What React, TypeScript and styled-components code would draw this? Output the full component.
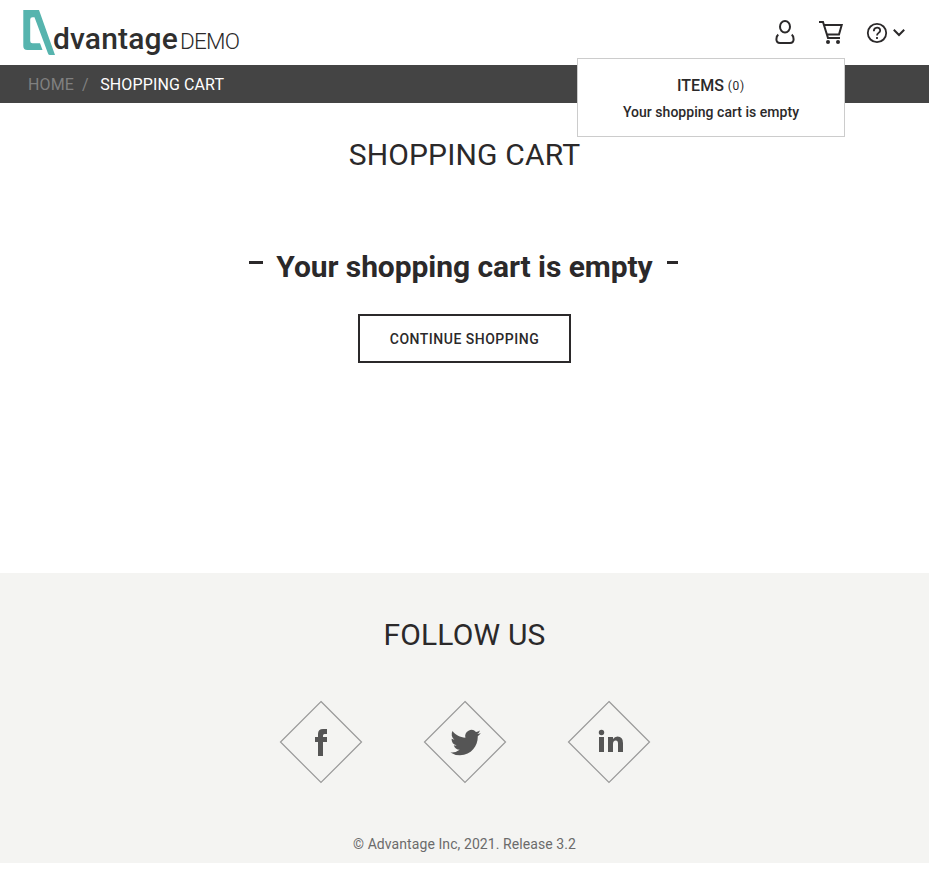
import React from "react";
import styled, { createGlobalStyle } from "styled-components";

const GlobalStyle = createGlobalStyle`
  * { box-sizing: border-box; }
  body { margin: 0; background: #fff; color: #2b292a; font-family: Roboto, "Liberation Sans", sans-serif; }
  h1, h2, p { margin: 0; font-weight: 400; }
`;

const Header = styled.header`
  position: relative;
  display: flex;
  justify-content: space-between;
  height: 65px;
  padding: 0 22px 0 23px;
`;

const Logo = styled.a`
  display: flex;
  align-items: flex-start;
  padding-top: 10px;
`;

const LogoName = styled.span`
  margin: 11px 0 0 -2px;
  font-size: 30px;
  line-height: 36px;
  font-weight: 500;
  letter-spacing: 0.15px;
  color: #2f2f2f;
`;

const LogoSuffix = styled.span`
  margin: 17px 0 0 2px;
  font-size: 22.5px;
  line-height: 28px;
  font-weight: 300;
  letter-spacing: -0.7px;
`;

const Tools = styled.div`
  display: flex;
  align-items: flex-start;
  padding-top: 18px;
`;

const UserIcon = styled.svg`
  margin-right: 22px;
`;

const CartIcon = styled.svg`
  margin-right: 21px;
`;

const CartPopup = styled.section`
  position: absolute;
  top: 58px;
  right: 84px;
  width: 268px;
  height: 79px;
  padding-top: 17px;
  border: 1px solid #ccc;
  background: #fff;
  text-align: center;
`;

const PopupTitle = styled.p`
  font-size: 16px;
  line-height: 20px;
  font-weight: 500;
`;

const PopupCount = styled.span`
  font-size: 12px;
  font-weight: 400;
  letter-spacing: 0.7px;
  vertical-align: 1px;
`;

const PopupText = styled.p`
  margin-top: 7px;
  font-size: 14px;
  line-height: 18px;
  font-weight: 500;
  letter-spacing: 0.03px;
`;

const Breadcrumb = styled.nav`
  display: flex;
  align-items: center;
  height: 38px;
  padding-left: 28px;
  background: #444;
  font-size: 16px;
  letter-spacing: 0.12px;
  color: #808080;
`;

const Separator = styled.span`
  margin: 0 11.5px 0 8px;
`;

const Current = styled.span`
  color: #fff;
`;

const Main = styled.main`
  display: flex;
  flex-direction: column;
  align-items: center;
  height: 470px;
  padding-top: 32px;
`;

const Title = styled.h1`
  font-size: 30px;
  line-height: 40px;
  letter-spacing: 0.17px;
`;

const EmptyMessage = styled.div`
  display: flex;
  align-items: center;
  margin: 72px 0 0 -2px;
`;

const Dash = styled.span<{ $width: number }>`
  width: ${(p) => p.$width}px;
  height: 3px;
  margin-top: -9px;
  background: #2b292a;
`;

const EmptyText = styled.h2`
  margin: 0 14px 0 13px;
  font-size: 30px;
  line-height: 40px;
  font-weight: 700;
  letter-spacing: -0.07px;
`;

const ContinueButton = styled.button`
  width: 213px;
  height: 49px;
  margin-top: 27px;
  padding: 0;
  border: 2px solid #2b292a;
  background: #fff;
  color: #2b292a;
  font: 500 14px Roboto, sans-serif;
  letter-spacing: 0.5px;
`;

const Footer = styled.footer`
  display: flex;
  flex-direction: column;
  align-items: center;
  height: 290px;
  padding-top: 42px;
  background: #f4f4f2;
`;

const SocialRow = styled.div`
  display: flex;
  gap: 60px;
  margin-top: 45px;
`;

const Copyright = styled.p`
  margin-top: 50px;
  font-size: 14px;
  line-height: 20px;
  letter-spacing: 0.08px;
  color: #6b6b6b;
`;

const SocialLink = ({ label, children }: { label: string; children: React.ReactNode }) => (
  <a aria-label={label}>
    <svg width="84" height="84" viewBox="0 0 84 84" display="block">
      <path d="M42 1.5 82.5 42 42 82.5 1.5 42Z" fill="none" stroke="#999" strokeWidth="1.2" />
      <g fill="#555">{children}</g>
    </svg>
  </a>
);

export default function App() {
  return (
    <>
      <GlobalStyle />
      <Header>
        <Logo>
          <svg width="32" height="45" viewBox="0 0 32 45">
            <path fill="#56b4ae" fillRule="evenodd" d="M0.3 0H16L32 45H27Q25.5 45 25 43.5L11.5 7.2H9.5Q7.2 7.2 7.2 9.5V31Q7.2 33.2 9.5 33.2H17L19.5 40H4.300Q0.3 40 0.3 36Z" />
          </svg>
          <LogoName>dvantage</LogoName>
          <LogoSuffix>DEMO</LogoSuffix>
        </Logo>
        <Tools>
          <UserIcon width="22" height="28" viewBox="0 0 22 28" fill="none" stroke="#2b292a" strokeWidth="2">
            <ellipse cx="11" cy="8.7" rx="5" ry="5.8" />
            <path d="M4.300 16.6C2.8 17.6 2.400 19.3 2.400 21.3 2.400 23.9 3.6 25 6 25H16C18.4 25 19.6 23.9 19.6 21.3 19.6 19.3 19.200 17.6 17.700 16.6" />
          </UserIcon>
          <CartIcon width="26" height="28" viewBox="0 0 26 28" fill="none" stroke="#2b292a" strokeWidth="2">
            <path d="M1 4H5L10 20H22M5.8 7H23.7L21 16.5H9" />
            <circle cx="10" cy="24" r="2" fill="#2b292a" stroke="none" />
            <circle cx="20" cy="24" r="2" fill="#2b292a" stroke="none" />
          </CartIcon>
          <svg width="42" height="28" viewBox="0 0 42 28" fill="none" stroke="#2b292a" strokeWidth="2">
            <circle cx="12" cy="15" r="9.2" strokeWidth="1.8" />
            <path strokeWidth="1.8" d="M8.8 13.2C8.8 8.5 15.2 8.5 15.2 12.4 15.2 15 12 14.8 12 17.4M12 18.9V20.9" />
            <path d="M28.8 11.8 34 17 39.2 11.8" />
          </svg>
        </Tools>
        <CartPopup>
          <PopupTitle>ITEMS <PopupCount>(0)</PopupCount></PopupTitle>
          <PopupText>Your shopping cart is empty</PopupText>
        </CartPopup>
      </Header>
      <Breadcrumb>
        <span>HOME</span>
        <Separator>/</Separator>
        <Current>SHOPPING CART</Current>
      </Breadcrumb>
      <Main>
        <Title>SHOPPING CART</Title>
        <EmptyMessage>
          <Dash $width={14} />
          <EmptyText>Your shopping cart is empty</EmptyText>
          <Dash $width={11} />
        </EmptyMessage>
        <ContinueButton>CONTINUE SHOPPING</ContinueButton>
      </Main>
      <Footer>
        <Title as="h2">FOLLOW US</Title>
        <SocialRow>
          <SocialLink label="Facebook">
            <path d="M39 56V42H36V37H39V34Q39 29 44 29H48V34H45.5Q44 34 44 35.5V37H48V42H44V56Z" />
          </SocialLink>
          <SocialLink label="Twitter">
            <path transform="translate(27.4 27) scale(1.27 1.3)" d="M23.95 4.57a10 10 0 0 1-2.82.77 4.96 4.96 0 0 0 2.16-2.72 9.9 9.9 0 0 1-3.12 1.18 4.92 4.92 0 0 0-8.38 4.48C7.69 8.09 4.07 6.13 1.64 3.16a4.92 4.92 0 0 0 1.52 6.57 4.9 4.9 0 0 1-2.23-.61v.06a4.92 4.92 0 0 0 3.95 4.83 5 5 0 0 1-2.21.08 4.94 4.94 0 0 0 4.6 3.42A9.87 9.87 0 0 1 0 19.54a14 14 0 0 0 7.55 2.21c9.05 0 14-7.5 14-13.98 0-.21 0-.42-.02-.63a9.9 9.9 0 0 0 2.42-2.57Z" />
          </SocialLink>
          <SocialLink label="LinkedIn">
            <circle cx="34.5" cy="32.5" r="2.7" />
            <path d="M32 37H37V52H32ZM41 37H46V39Q47.5 36.5 50.5 36.5Q56 36.5 56 43V52H51V43.5Q51 40.5 48.7 40.5Q46 40.5 46 44V52H41Z" />
          </SocialLink>
        </SocialRow>
        <Copyright>© Advantage Inc, 2021. Release 3.2</Copyright>
      </Footer>
    </>
  );
}
